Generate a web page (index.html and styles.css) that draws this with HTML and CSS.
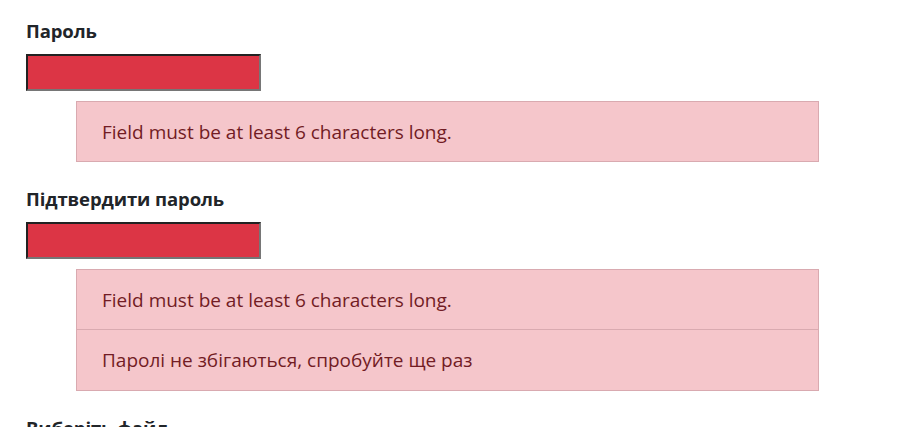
FILE: index.html
```html
<!DOCTYPE html>
<html lang="uk">
<head>
<meta charset="utf-8">
<link rel="stylesheet" href="styles.css">
</head>
<body>
<form class="form">
  <div class="group">
    <label class="label">Пароль</label>
    <input class="field" type="password">
    <ul class="errors">
      <li class="error">Field must be at least 6 characters long.</li>
    </ul>
  </div>
  <div class="group">
    <label class="label">Підтвердити пароль</label>
    <input class="field" type="password">
    <ul class="errors">
      <li class="error">Field must be at least 6 characters long.</li>
      <li class="error">Паролі не збігаються, спробуйте ще раз</li>
    </ul>
  </div>
  <div class="group">
    <label class="label">Виберіть файл</label>
  </div>
</form>
</body>
</html>
```
FILE: styles.css
```css
html, body {
  margin: 0;
  padding: 0;
  background: #fff;
}
body {
  font-family: "Open Sans", "Noto Sans", sans-serif;
  color: #212529;
}
.form {
  padding: 17px 0 0 26px;
  display: flex;
  flex-direction: column;
  gap: 23px;
}
.group {
  display: flex;
  flex-direction: column;
  align-items: flex-start;
}
.label {
  font-size: 18.5px;
  font-weight: 700;
  line-height: 27px;
  margin-bottom: 10px;
  letter-spacing: -0.1px;
}
.field {
  box-sizing: border-box;
  width: 235px;
  height: 37px;
  margin: 0;
  padding: 0;
  background: #dc3545;
  border-style: solid;
  border-width: 2px;
  border-color: #222 #767676 #767676 #222;
}
.errors {
  list-style: none;
  margin: 10px 0 0 50px;
  padding: 0;
  width: 743px;
}
.error {
  box-sizing: border-box;
  height: 61px;
  display: flex;
  align-items: center;
  padding: 0 25px;
  background: #f5c6cb;
  color: #721c24;
  border: 1px solid #d9aab0;
  font-size: 19px;
}
.error + .error {
  border-top: 0;
}
```
